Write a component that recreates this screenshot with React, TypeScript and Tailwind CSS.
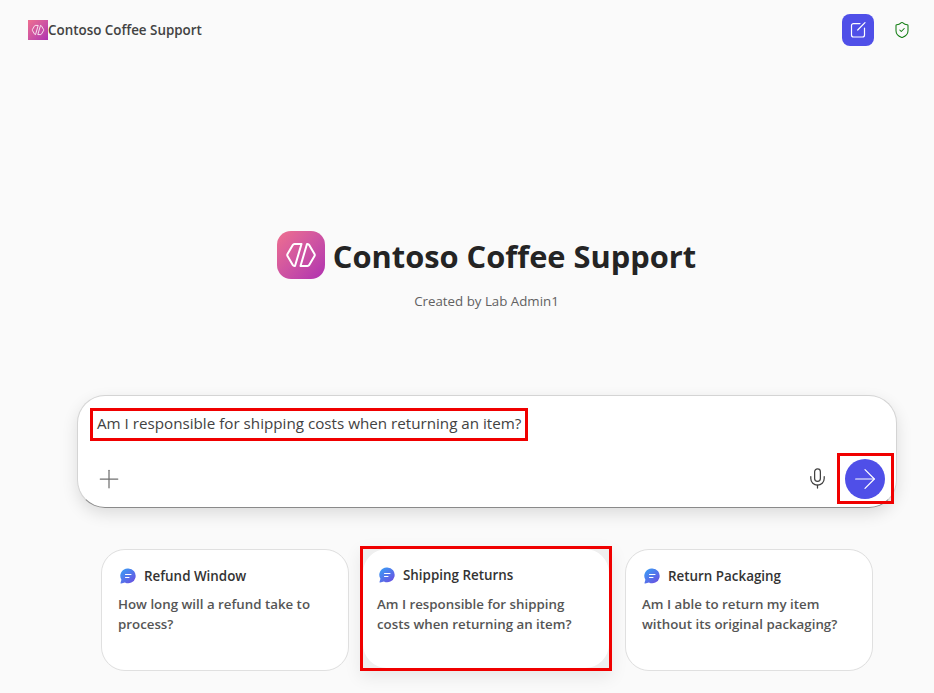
import { Mic, Plus, ArrowRight, ShieldCheck } from 'lucide-react';

const font = "font-['Segoe_UI','Open_Sans','Noto_Sans',sans-serif]";

function LogoMark({ size }: { size: number }) {
  return (
    <svg width={size} height={size} viewBox="0 0 48 48" fill="none">
      <path
        d="M24.5 13H17.5a2 2 0 0 0-1.7 1L10.5 23a2 2 0 0 0 0 2l5.3 9a2 2 0 0 0 1.7 1H18Z"
        stroke="white"
        strokeWidth="2"
        strokeLinejoin="round"
      />
      <path
        d="M23.5 35H30.5a2 2 0 0 0 1.7-1l5.3-9a2 2 0 0 0 0-2l-5.3-9a2 2 0 0 0-1.7-1H30Z"
        stroke="white"
        strokeWidth="2"
        strokeLinejoin="round"
      />
    </svg>
  );
}

function NewChatIcon() {
  return (
    <svg width="18" height="18" viewBox="0 0 18 18" fill="none" stroke="currentColor" strokeWidth="1.2" strokeLinecap="round">
      <path d="M11 2.6H4.5a2 2 0 0 0-2 2V14a2 2 0 0 0 2 2h9a2 2 0 0 0 2-2V7" />
      <path d="M8.7 9L16 1.7" />
    </svg>
  );
}

function ChatBubble({ id }: { id: string }) {
  return (
    <svg width="16" height="16" viewBox="0 0 16 16" className="shrink-0 ml-[2px]">
      <defs>
        <linearGradient id={id} x1="2" y1="1" x2="14" y2="15" gradientUnits="userSpaceOnUse">
          <stop offset="0" stopColor="#3b9cf5" />
          <stop offset="1" stopColor="#6a4fe0" />
        </linearGradient>
      </defs>
      <path
        d="M8.3 0.5a7.4 7.4 0 1 1-3.4 14L1.2 15.6c-.5.1-.8-.3-.7-.7l.9-3.2A7.4 7.4 0 0 1 8.3 0.5Z"
        fill={`url(#${id})`}
      />
      <path d="M5.5 6.5h5.5M5.5 9.5h3.5" stroke="white" strokeWidth="1.1" strokeLinecap="round" />
    </svg>
  );
}

function Card({
  id,
  title,
  text,
  spacing,
  bodyGap,
}: {
  id: string;
  title: string;
  text: string;
  spacing: string;
  bodyGap: string;
}) {
  return (
    <div className={`${spacing} w-full h-full bg-white rounded-[24px] pr-3 pt-4`}>
      <div className="flex items-center gap-2 h-5">
        <ChatBubble id={id} />
        <span className="text-[13.4px] font-semibold leading-5 text-[#333]">{title}</span>
      </div>
      <p className={`${bodyGap} text-[13.3px] font-semibold leading-5 text-[#555]`}>{text}</p>
    </div>
  );
}

export default function App() {
  return (
    <div className={`${font} relative w-[934px] h-[693px] overflow-hidden bg-[#fafafa] flex flex-col`}>
      <header className="h-[60px] shrink-0 flex items-center pl-7 pr-4">
        <div className="w-5 h-5 bg-gradient-to-br from-[#ef6f8e] to-[#b02fb0] flex items-center justify-center">
          <LogoMark size={20} />
        </div>
        <span className="text-[13.4px] font-semibold text-[#424242]">Contoso Coffee Support</span>
        <div className="ml-auto flex items-center gap-3">
          <button className="w-8 h-8 rounded-lg bg-[#4f4fe8] flex items-center justify-center text-white">
            <NewChatIcon />
          </button>
          <div className="w-8 h-8 flex items-center justify-center text-[#107c10]">
            <ShieldCheck size={18} strokeWidth={1.4} />
          </div>
        </div>
      </header>

      <div className="mt-[171px] ml-[39px] flex items-center justify-center gap-2">
        <div className="w-12 h-12 rounded-[14px] bg-gradient-to-br from-[#ef6f8e] to-[#b02fb0]">
          <LogoMark size={48} />
        </div>
        <h1 className="text-[30.8px] font-bold leading-[50px] h-12 text-[#242424] whitespace-nowrap">
          Contoso Coffee Support
        </h1>
      </div>
      <p className="mt-3 ml-[39px] text-center text-[13.3px] leading-5 text-[#616161]">Created by Lab Admin1</p>

      <div className="relative mt-[84px] ml-[77px] w-[820px] h-[113px] shrink-0 bg-white rounded-[28px] border border-[#d4d4d4] border-b-[#8a8a8a] shadow-[0_6px_16px_rgba(0,0,0,0.12)]">
        <div className="absolute left-3 top-3 w-[438px] h-[33px] border-[3px] border-[#f00000] flex items-center pl-[4px] pb-[2px]">
          <span className="text-[15.2px] text-[#424242] whitespace-nowrap">
            Am I responsible for shipping costs when returning an item?
          </span>
        </div>
        <div className="absolute left-[16px] top-[68px] text-[#707070]">
          <Plus size={30} strokeWidth={1} />
        </div>
        <div className="absolute right-[67px] top-[71px] text-[#424242]">
          <Mic size={23} strokeWidth={1.3} />
        </div>
        <div className="absolute right-[2px] top-[57px] w-[57px] h-[51px] border-[3px] border-[#f00000] flex items-center justify-center pr-[1px]">
          <div className="w-10 h-10 rounded-full bg-[#4f4fe8] flex items-center justify-center text-white">
            <ArrowRight size={32} strokeWidth={0.9} />
          </div>
        </div>
      </div>

      <div className="mt-[38px] ml-[101px] flex items-start">
        <div className="mt-[3px] w-[248px] h-[122px] rounded-[24px] border border-[#e0e0e0] overflow-hidden">
          <Card
            id="bubble-a"
            title="Refund Window"
            text="How long will a refund take to process?"
            spacing="pl-4"
            bodyGap="mt-2"
          />
        </div>
        <div className="ml-[11px] w-[252px] h-[125px] border-[3px] border-[#f00000] bg-[#efefef] shadow-[0_6px_16px_rgba(0,0,0,0.08)]">
          <Card
            id="bubble-b"
            title="Shipping Returns"
            text="Am I responsible for shipping costs when returning an item?"
            spacing="pl-[14px]"
            bodyGap="mt-[9px]"
          />
        </div>
        <div className="ml-[13px] mt-[3px] w-[248px] h-[122px] rounded-[24px] border border-[#e0e0e0] overflow-hidden">
          <Card
            id="bubble-c"
            title="Return Packaging"
            text="Am I able to return my item without its original packaging?"
            spacing="pl-4"
            bodyGap="mt-2"
          />
        </div>
      </div>
    </div>
  );
}
